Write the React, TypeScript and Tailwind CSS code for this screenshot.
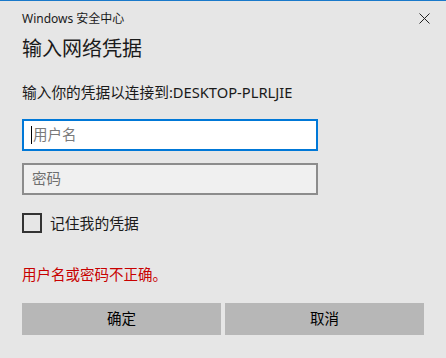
const font = { fontFamily: '"Noto Sans", "Noto Sans CJK SC", sans-serif' };

const App = () => {
  return (
    <div
      style={font}
      className="w-[446px] h-[358px] bg-[#e6e6e6] border-t border-[#1979ca] text-[#1a1a1a] overflow-hidden"
    >
      {/* 标题栏 */}
      <div className="h-[35px] flex items-center justify-between pl-[22px] pr-[10px]">
        <span className="text-[12px] leading-none">Windows 安全中心</span>
        <button className="w-[24px] h-[24px] flex items-center justify-center">
          <svg width="11" height="11" viewBox="0 0 11 11">
            <path d="M0.5 0.5 L10.5 10.5 M10.5 0.5 L0.5 10.5" stroke="#222" strokeWidth="1" />
          </svg>
        </button>
      </div>

      <div className="px-[22px]">
        <h1 className="text-[20px] leading-[26px]">输入网络凭据</h1>
        <p className="mt-[20px] text-[14.7px] leading-[20px]">输入你的凭据以连接到:DESKTOP-PLRLJIE</p>

        {/* 用户名 */}
        <div className="mt-[17px] w-[296px] h-[32px] bg-white border-2 border-[#0078d7] flex items-center pl-[7px]">
          <span className="w-px h-[18px] bg-black mr-px" />
          <span className="text-[14.5px] text-[#7a7a7a]">用户名</span>
        </div>

        {/* 密码 */}
        <div className="mt-[12px] w-[296px] h-[32px] bg-[#f0f0f0] border-2 border-[#8c8c8c] flex items-center pl-[8px]">
          <span className="text-[14.5px] text-[#6e6e6e]">密码</span>
        </div>

        {/* 记住我 */}
        <label className="mt-[18px] flex items-center gap-[8px] h-[20px]">
          <span className="w-[20px] h-[20px] border-2 border-[#333333]" />
          <span className="text-[14.8px]">记住我的凭据</span>
        </label>

        <p className="mt-[31px] text-[14.5px] leading-[20px] text-[#c80000]">用户名或密码不正确。</p>

        <div className="mt-[19px] flex gap-[4px]">
          <button className="w-[201px] h-[32px] bg-[#b7b7b7] text-[14.5px] text-black">确定</button>
          <button className="w-[201px] h-[32px] bg-[#b7b7b7] text-[14.5px] text-black">取消</button>
        </div>
      </div>
    </div>
  );
};

export default App;
